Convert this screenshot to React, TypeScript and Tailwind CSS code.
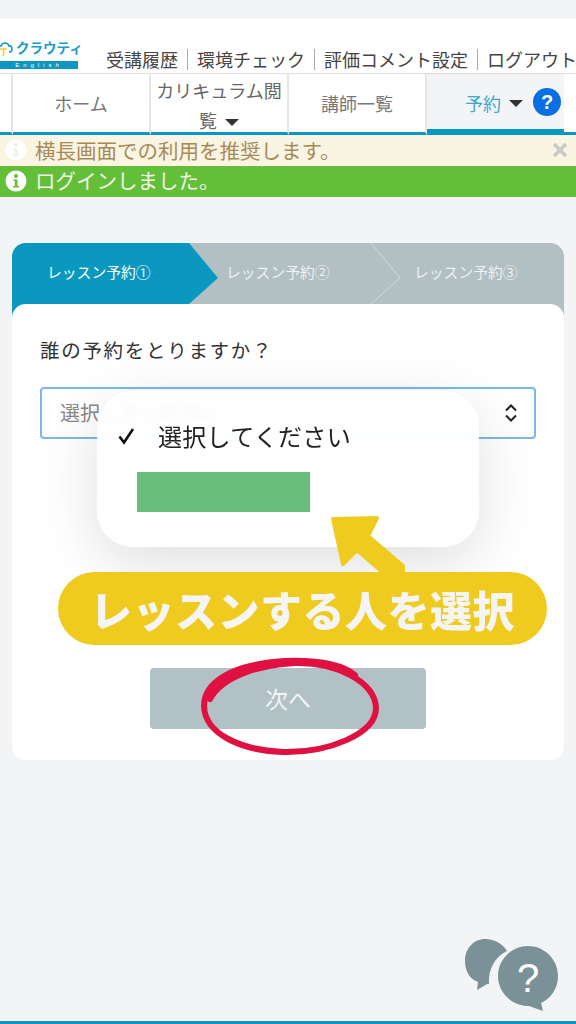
import React from "react";

const JP = "font-['Noto_Sans_CJK_JP','Noto_Sans',sans-serif]";

function InfoDot({ color }: { color: string }) {
  return (
    <svg width="22" height="22" viewBox="0 0 22 22" className="shrink-0">
      <circle cx="11" cy="11" r="10.5" fill="#fff" />
      <circle cx="11" cy="6" r="2" fill={color} />
      <path d="M8.5 9.5h4v6.5h1.5v1.6H8.2V16h1.6v-4.9H8.5z" fill={color} />
    </svg>
  );
}

function Header() {
  const links = ["受講履歴", "環境チェック", "評価コメント設定", "ログアウト"];
  return (
    <div className="h-[54px] bg-white flex items-end overflow-hidden">
      <div className="w-[78px] shrink-0 mb-1">
        <div className="flex items-center h-[22px]">
          <svg width="18" height="20" viewBox="0 0 18 20" className="-ml-[3px] shrink-0">
            <path d="M3 14C0 14 0 8 4 8c1-4 7-4 8 0 4-1 4 6 0 6" fill="none" stroke="#1b9ac8" strokeWidth="1.6" />
            <path d="M3 11h7M6.500 11v7" fill="none" stroke="#f0cb30" strokeWidth="1.6" />
          </svg>
          <span className="text-[13.500px] leading-none font-bold text-[#1b9ac8] whitespace-nowrap ml-px">クラウティ</span>
        </div>
        <div className="h-2 mt-[2px] bg-[#0a98c0] flex items-center justify-center text-[6px] leading-none tracking-[4px] text-white font-['Liberation_Sans',sans-serif]">
          English
        </div>
      </div>
      <div className="flex items-center ml-[28px] mb-[2px] whitespace-nowrap text-[18px] leading-[24px] text-[#444]">
        {links.map((l, i) => (
          <React.Fragment key={l}>
            {i > 0 && <span className="w-px h-[21px] bg-[#aaa] mx-[9px]" />}
            <span>{l}</span>
          </React.Fragment>
        ))}
      </div>
    </div>
  );
}

function Caret() {
  return <span className="inline-block align-middle ml-2 w-0 h-0 border-x-[7px] border-x-transparent border-t-[7px] border-t-[#333]" />;
}

function NavBar() {
  const cell = "w-[138px] shrink-0 h-[61px] bg-white border-b-[3px] border-b-[#0a98c0] border-r-2 border-r-[#e6e6e6] flex items-center justify-center text-center text-[18px] text-[#777]";
  return (
    <div className="flex h-[61px] border-t border-[#ddd] bg-white">
      <div className="w-[13px] shrink-0 h-[61px] bg-white border-b-[3px] border-b-[#0a98c0] border-r-2 border-r-[#e6e6e6]" />
      <div className={cell}>ホーム</div>
      <div className={`${cell} leading-[30px] pt-[3px]`}>
        <span className="block w-[130px] text-[#666]">
          カリキュラム閲
          <br />覧<Caret />
        </span>
      </div>
      <div className={cell}>講師一覧</div>
      <div className="w-[137px] shrink-0 h-[61px] bg-[#f2f4f6] border-b-[6px] border-b-[#0a98c0] flex items-center pl-[38px] pt-[3px] text-[18px] text-[#3fa8cc] whitespace-nowrap">
        予約
        <Caret />
        <svg width="28" height="28" viewBox="0 0 28 28" className="ml-[10px] -mt-[3px] shrink-0">
          <circle cx="14" cy="14" r="14" fill="#0a6fe0" />
          <text x="14" y="21" textAnchor="middle" fontSize="20" fontWeight="700" fill="#fff" fontFamily="Liberation Sans, sans-serif">?</text>
        </svg>
      </div>
      <div className="flex-1 h-[61px] bg-white border-b-[3px] border-b-[#0a98c0]" />
    </div>
  );
}

function Alerts() {
  return (
    <div className="mt-[2px]">
      <div className="h-[30px] bg-[#faf5e3] flex items-center pl-[5px] pr-[7px] pb-[2px] text-[20.500px] text-[#a88a58] whitespace-nowrap">
        <InfoDot color="#f4efe0" />
        <span className="ml-2">横長画面での利用を推奨します。</span>
        <span className="ml-auto">
          <svg width="18" height="18" viewBox="0 0 18 18">
            <path d="M3 3l12 12M15 3L3 15" stroke="#c9c9c6" strokeWidth="3.500" />
          </svg>
        </span>
      </div>
      <div className="h-[31px] bg-[#64bf38] flex items-center pl-[5px] pb-[2px] text-[20.500px] text-[#f0f4ea] whitespace-nowrap">
        <InfoDot color="#64bf38" />
        <span className="ml-[8px]">ログインしました。</span>
      </div>
    </div>
  );
}

function Steps() {
  return (
    <div className="relative h-[75px] rounded-t-[14px] bg-[#b2bfc3] overflow-hidden flex text-[14.800px] text-[#eef2f3]">
      <div className="w-[206px] shrink-0 h-[61px] pl-[35px] pb-[2px] flex items-center bg-[#0a98c0] text-white [clip-path:polygon(0_0,177px_0,206px_35px,177px_61px,0_61px)]">
        レッスン予約①
      </div>
      <div className="absolute left-0 top-[61px] w-[177px] h-[14px] bg-[#0a98c0]" />
      <div className="w-[182px] shrink-0 h-[61px] pl-[8px] pb-[2px] flex items-center">レッスン予約②</div>
      <div className="h-[61px] pl-[14px] pb-[2px] flex items-center">レッスン予約③</div>
      <svg width="60" height="61" viewBox="0 0 60 61" className="absolute left-[347px] top-0">
        <path d="M12 0l29 35-29 26" fill="none" stroke="#d3dcdf" strokeWidth="1" />
      </svg>
    </div>
  );
}

function LessonCard() {
  return (
    <div className="mx-3 mt-[46px]">
      <Steps />
      <div className="relative -mt-[14px] h-[456px] rounded-[14px] bg-white px-7 pt-[32px]">
        <p className="text-[19.500px] leading-[28px] tracking-[1.700px] text-[#333]">誰の予約をとりますか？</p>
        <div className="mt-[23px] h-[52px] rounded-[4px] border-2 border-[#7ab8ee] bg-white flex items-center pl-[18px] pr-[16px] text-[20px] text-[#888]">
          選択してください
          <svg width="14" height="20" viewBox="0 0 14 20" className="ml-auto">
            <path d="M2 7.500L7 2.500l5 5M2 12.500l5 5 5-5" fill="none" stroke="#222" strokeWidth="2" />
          </svg>
        </div>
        <div className="mt-[229px] mx-auto w-[276px] h-[61px] rounded-[4px] bg-[#b2c1c6] flex items-center justify-center text-[23px] text-[#f2f5f6]">
          次へ
        </div>
      </div>
    </div>
  );
}

export default function App() {
  return (
    <div className={`relative w-[576px] h-[1024px] overflow-hidden bg-[#f2f4f6] pt-[19px] flex flex-col ${JP}`}>
      <Header />
      <NavBar />
      <Alerts />
      <LessonCard />
      <div className="mt-auto h-[3px] bg-[#0a98c0]" />

      {/* select popup annotation */}
      <div className="absolute left-[97px] top-[391px] w-[382px] h-[156px] rounded-[36px] bg-white/85 backdrop-blur-[5px] shadow-[0_16px_60px_rgba(0,0,0,0.13)] pl-[21px] pt-[26px]">
        <div className="flex items-center h-[38px] text-[24px] text-[#222] tracking-[0.300px]">
          <svg width="17" height="18" viewBox="0 0 17 18" className="shrink-0">
            <path d="M1.500 9.500l4.500 6L15 2" fill="none" stroke="#111" strokeWidth="2.600" />
          </svg>
          <span className="ml-[23px]">選択してください</span>
        </div>
        <div className="mt-[17px] ml-[19px] w-[173px] h-[40px] bg-[#6abd7a]" />
      </div>

      {/* yellow arrow */}
      <svg width="90" height="70" viewBox="0 0 90 70" className="absolute left-[325px] top-[510px]">
        <path d="M8 9L52 8 43 26 78 56 78 66 62 66 32 40 18 54z" fill="#efcb20" stroke="#efcb20" strokeWidth="4" strokeLinejoin="round" />
      </svg>
      <div className="absolute left-[58px] top-[572px] w-[489px] h-[73px] rounded-[37px] bg-[#efcb20] flex items-center justify-center text-[42px] leading-none font-black text-[#f5f5f5] whitespace-nowrap tracking-[0.500px]">
        レッスンする人を選択
      </div>

      {/* red circle */}
      <svg width="196" height="110" viewBox="0 0 196 110" className="absolute left-[195px] top-[652px]">
        <path
          d="M15 47C26 26 60 13 100 11c42-1 80 19 81 45 0 26-48 45-93 44C45 98 10 82 9 54 9 30 38 12 90 9c30-1 55 2 70 14"
          fill="none"
          stroke="#e01040"
          strokeWidth="6"
          strokeLinecap="round"
        />
      </svg>

      {/* help bubbles */}
      <svg width="100" height="80" viewBox="0 0 100 80" className="absolute left-[460px] top-[934px]">
        <path d="M25 5c10 0 18 5 22 12-12 6-19 18-18 33l-2 0-10 6 1-8C9 45 5 36 5 27 5 14 14 5 25 5z" fill="#7b9198" />
        <path d="M68 12c16.500 0 30 13.500 30 30 0 13-8 23-17 27l2 8-14-5C51 72 38 58 38 42c0-16.500 13.500-30 30-30z" fill="#7b9198" />
        <text x="68" y="58" textAnchor="middle" fontSize="40" fill="#fff" fontFamily="Liberation Sans, sans-serif">?</text>
      </svg>
    </div>
  );
}
